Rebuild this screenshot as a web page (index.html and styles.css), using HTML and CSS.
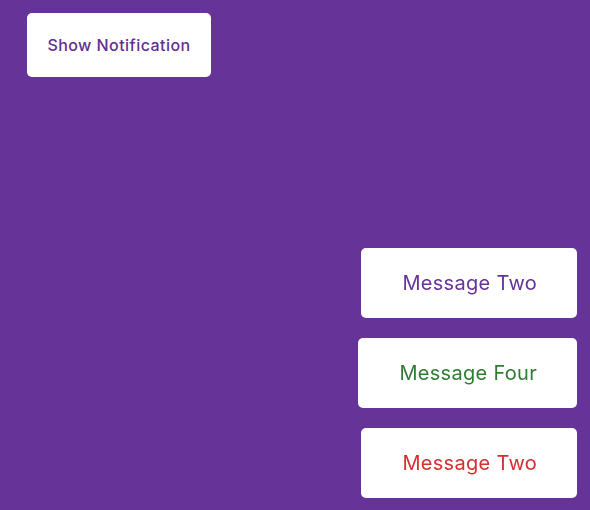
FILE: index.html
```html
<!DOCTYPE html>
<html>
<head>
<meta charset="utf-8">
<link rel="stylesheet" href="styles.css">
</head>
<body>
<button class="show-btn">Show Notification</button>
<div class="toasts">
  <div class="toast toast-info">Message Two</div>
  <div class="toast toast-success">Message Four</div>
  <div class="toast toast-error">Message Two</div>
</div>
</body>
</html>
```

FILE: styles.css
```css
* { box-sizing: border-box; }
html, body { height: 100%; }
body {
  margin: 0;
  background: #663399;
  font-family: "Inter", "Noto Sans", sans-serif;
  overflow: hidden;
  padding: 13px 27px;
}
.show-btn {
  font-family: inherit;
  background: #fff;
  color: #5f3091;
  border: 0;
  border-radius: 5px;
  width: 184px;
  height: 64px;
  font-size: 16px;
  font-weight: 500;
  letter-spacing: 0.45px;
  cursor: pointer;
}
.toasts {
  position: fixed;
  right: 13px;
  bottom: 12px;
  display: flex;
  flex-direction: column;
  align-items: flex-end;
  gap: 20px;
}
.toast {
  background: #fff;
  border-radius: 5px;
  height: 70px;
  padding: 0 40px 0 41px;
  display: flex;
  align-items: center;
  justify-content: center;
  font-size: 20px;
  font-weight: 400;
  letter-spacing: 0.3px;
}
.toast-info { color: #663399; }
.toast-success { color: #2e7d32; }
.toast-error { color: #d32f2f; }
```
